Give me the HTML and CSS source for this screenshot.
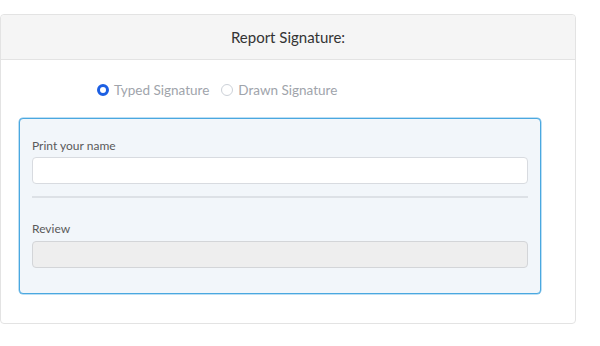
FILE: index.html
```html
<!DOCTYPE html>
<html lang="en">
<head>
  <meta charset="UTF-8">
  <title>Report Signature</title>
  <link rel="stylesheet" href="styles.css">
</head>
<body>

  <div class="page">
    <div class="card">
      <div class="card-header">Report Signature:</div>

      <div class="card-body">
        <!-- Signature type -->
        <div class="sig-type">
          <label class="radio">
            <input type="radio" name="sigtype" checked>
            <span class="dot"></span>
            Typed Signature
          </label>
          <label class="radio">
            <input type="radio" name="sigtype">
            <span class="dot"></span>
            Drawn Signature
          </label>
        </div>

        <!-- Typed signature panel -->
        <div class="sig-box">
          <label for="printName">Print your name</label>
          <input type="text" id="printName" class="field">
          <hr>
          <label for="review" class="review-label">Review</label>
          <input type="text" id="review" class="field readonly" readonly>
        </div>
      </div>
    </div>
  </div>

</body>
</html>
```

FILE: styles.css
```css
body {
  margin: 0;
  font-family: Lato, "Open Sans", sans-serif;
  background: #fff;
}

.page {
  padding-top: 14px;
}

.card {
  width: 576px;
  box-sizing: border-box;
  border: 1px solid #e3e3e3;
  border-radius: 4px;
  background: #fff;
}

.card-header {
  background: #f5f5f5;
  border-bottom: 1px solid #e3e3e3;
  height: 44px;
  line-height: 44px;
  text-align: center;
  font-size: 15px;
  color: #333;
  border-radius: 4px 4px 0 0;
}

.card-body {
  padding: 21px 34px 29px 18px;
}

.sig-type {
  display: flex;
  gap: 12px;
  padding-left: 78px;
  height: 18px;
  align-items: center;
  margin-bottom: 19px;
}

.radio {
  display: flex;
  align-items: center;
  gap: 5px;
  font-size: 13.5px;
  color: #a0a4ab;
}

.radio input {
  display: none;
}

.dot {
  width: 12px;
  height: 12px;
  box-sizing: border-box;
  border-radius: 50%;
  border: 1px solid #ccd1d8;
  background: #fff;
}

.radio input:checked + .dot {
  border: 3.5px solid #1c5fe3;
}

.sig-box {
  border: 1px solid #4aa8e0;
  border-radius: 4px;
  background: #f2f6fa;
  padding: 19px 12px 25px 12px;
  box-shadow: 0 0 0 0.5px #7cc0ea;
}

.sig-box label {
  display: block;
  font-size: 12px;
  color: #5a5a5a;
  margin-bottom: 4px;
}

.sig-box .review-label {
  margin-bottom: 5px;
}

.field {
  display: block;
  width: 100%;
  height: 27px;
  box-sizing: border-box;
  border: 1px solid #d8dbe0;
  border-radius: 4px;
  background: #fff;
  padding: 4px 8px;
  font-size: 13px;
  margin: 0;
}

.field.readonly {
  background: #eeeeee;
  border-color: #d3d5d8;
}

hr {
  border: 0;
  border-top: 2px solid #dde1e6;
  margin: 12px 0 23px 0;
}
```
